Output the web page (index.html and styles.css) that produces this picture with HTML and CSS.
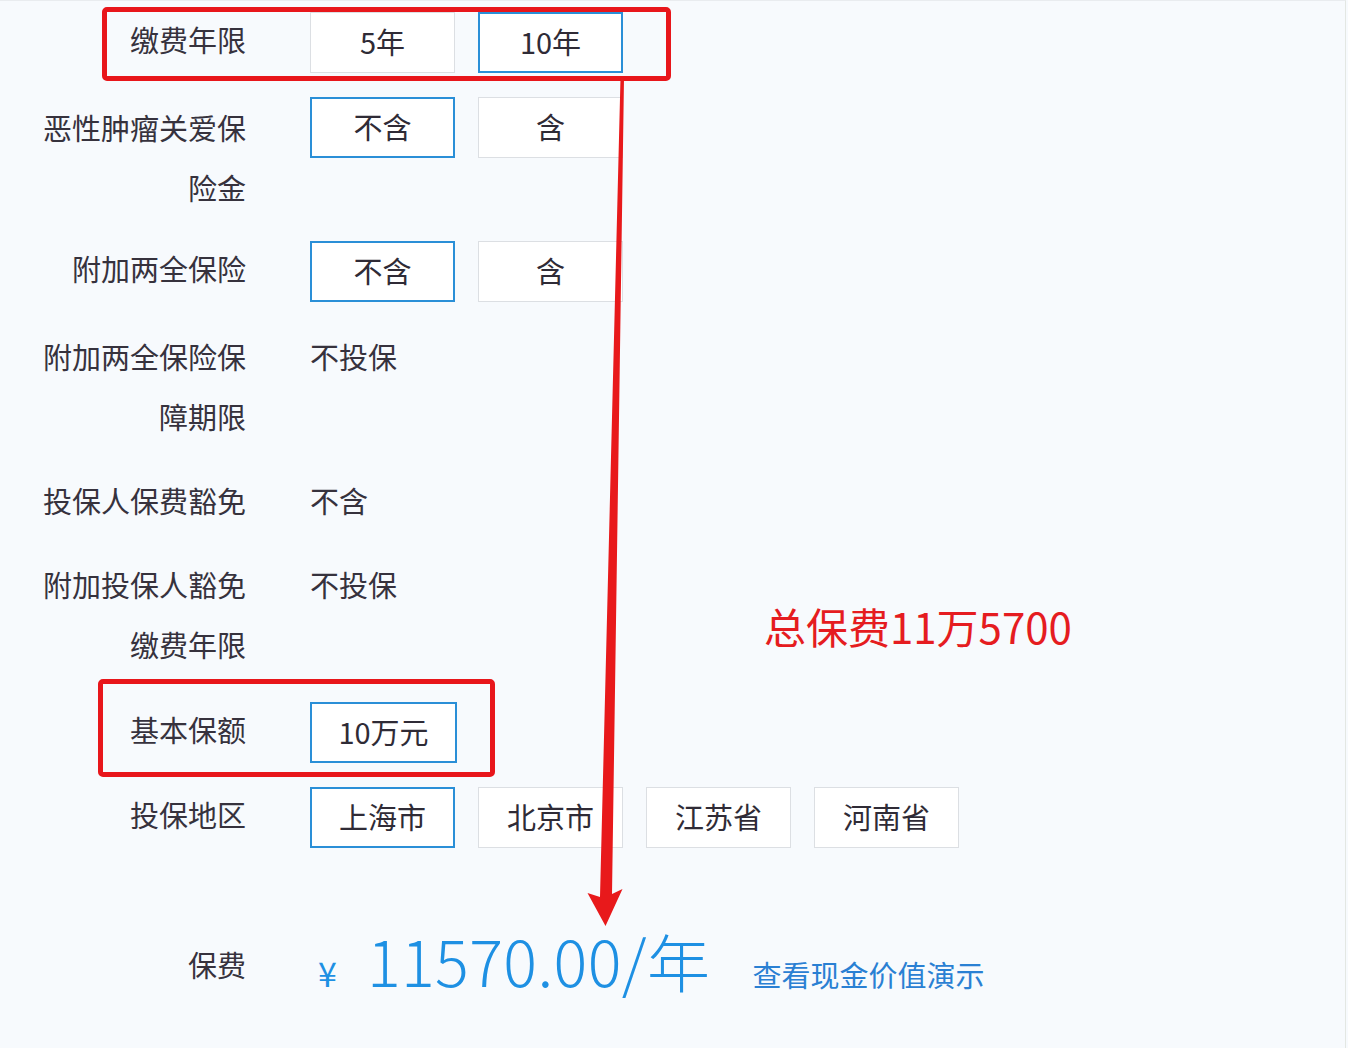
FILE: index.html
```html
<!DOCTYPE html>
<html lang="zh-CN">
<head>
<meta charset="utf-8">
<title>保费试算</title>
<link rel="stylesheet" href="styles.css">
</head>
<body>
<div class="page">
  <div class="form">
    <div class="row choice">
      <div class="label">缴费年限</div>
      <div class="value">
        <span class="opt">5年</span>
        <span class="opt active">10年</span>
      </div>
    </div>
    <div class="row">
      <div class="label">恶性肿瘤关爱保险金</div>
      <div class="value">
        <span class="opt active">不含</span>
        <span class="opt">含</span>
      </div>
    </div>
    <div class="row choice">
      <div class="label">附加两全保险</div>
      <div class="value">
        <span class="opt active">不含</span>
        <span class="opt">含</span>
      </div>
    </div>
    <div class="row">
      <div class="label">附加两全保险保障期限</div>
      <div class="value text">不投保</div>
    </div>
    <div class="row">
      <div class="label">投保人保费豁免</div>
      <div class="value text">不含</div>
    </div>
    <div class="row">
      <div class="label">附加投保人豁免缴费年限</div>
      <div class="value text">不投保</div>
    </div>
    <div class="row choice row-amount">
      <div class="label">基本保额</div>
      <div class="value">
        <span class="opt wide active">10万元</span>
      </div>
    </div>
    <div class="row choice">
      <div class="label">投保地区</div>
      <div class="value">
        <span class="opt active">上海市</span>
        <span class="opt">北京市</span>
        <span class="opt">江苏省</span>
        <span class="opt">河南省</span>
      </div>
    </div>
    <div class="row row-fee">
      <div class="label">保费</div>
      <div class="fee">
        <span class="yen">¥</span>
        <span class="amount">11570.00/年</span>
        <a class="link" href="#">查看现金价值演示</a>
      </div>
    </div>
  </div>

  <div class="mark mark-term"></div>
  <div class="mark mark-sum"></div>
  <svg class="arrow" viewBox="580 70 60 870" width="60" height="870" aria-hidden="true">
    <polygon points="620.5,78 624,78 612,894 622.5,889 605.5,926 587.5,893 600,897" fill="#e8191b"/>
  </svg>
  <div class="note">总保费11万5700</div>
</div>
</body>
</html>
```

FILE: styles.css
```css
* {
  box-sizing: border-box;
}

body {
  margin: 0;
  background: #f7fafd;
  font-family: "Noto Sans CJK SC", "Noto Sans", sans-serif;
  color: #36323d;
}

.page {
  position: relative;
  width: 1346px;
  height: 1048px;
  border-top: 1px solid #e9ecef;
  border-right: 1px solid #e3e7e3;
}

.form {
  display: flex;
  flex-direction: column;
  gap: 24px;
  padding: 11px 0 0 42px;
}

.row {
  display: grid;
  grid-template-columns: 204px 1fr;
  column-gap: 64px;
  align-items: start;
}

.label {
  text-align: right;
  font-size: 29px;
  line-height: 60px;
}

.row.choice .label {
  line-height: 55px;
}

.value {
  display: flex;
  gap: 23px;
  font-size: 29px;
  line-height: 60px;
}

.opt {
  width: 145px;
  height: 61px;
  padding-bottom: 4px;
  border: 1px solid #dcdfe3;
  background: #fff;
  display: flex;
  align-items: center;
  justify-content: center;
  color: #2f2b36;
}

.opt.active {
  border: 2px solid #2a8fd7;
}

.opt.wide {
  width: 147px;
}

.row-amount {
  margin-top: 4px;
}

.row-fee {
  margin-top: 62px;
}

.fee {
  display: flex;
  align-items: baseline;
  line-height: 52px;
  color: #1e90e3;
}

.yen {
  font-size: 34px;
  margin-left: 8px;
}

.amount {
  font-size: 63px;
  font-weight: 300;
  letter-spacing: 0.4px;
  margin-left: 30px;
}

.link {
  font-size: 29px;
  color: #2a80d3;
  margin-left: 42px;
  text-decoration: none;
}

.mark {
  position: absolute;
  border: 5px solid #e8161b;
  border-radius: 5px;
}

.mark-term {
  left: 102px;
  top: 6px;
  width: 569px;
  height: 74px;
}

.mark-sum {
  left: 98px;
  top: 678px;
  width: 397px;
  height: 98px;
}

.arrow {
  position: absolute;
  left: 580px;
  top: 69px;
}

.note {
  position: absolute;
  left: 764px;
  top: 603px;
  font-size: 42px;
  line-height: 44px;
  color: #e51c20;
}
```
